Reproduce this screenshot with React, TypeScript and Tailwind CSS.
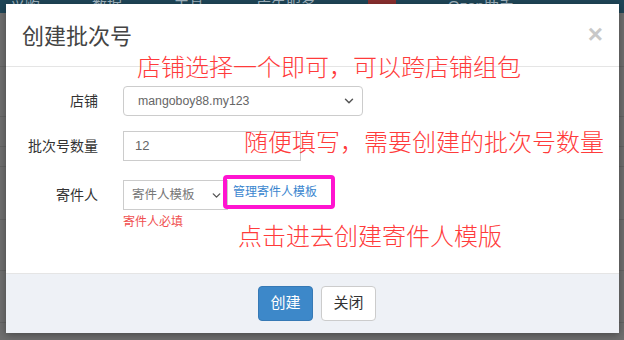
import { ChevronDown } from 'lucide-react';

const cjk = "font-['Liberation_Sans','Noto_Sans_CJK_SC',sans-serif]";

const bgRows = [40, 50, 30, 20, 53, 51, 52];

export default function App() {
  return (
    <div className={`relative w-[624px] h-[340px] overflow-hidden bg-[#6f6f6f] ${cjk}`}>
      {/* page behind the overlay */}
      <div className="h-[27px] bg-[#1f4658] flex items-end gap-[52px] pl-[10px] text-[15px] leading-none text-[#9fb3bf] translate-y-[-14px]">
        <span>采购</span>
        <span>数据</span>
        <span>工具</span>
        <span>广告服务</span>
        <span className="w-[28px] h-[14px] bg-[#8a2f2f]" />
        <span>Ozon助手</span>
      </div>
      <div className="flex flex-col">
        {bgRows.map((h, i) => (
          <div key={i} className="border-b border-[#646464]" style={{ height: h }} />
        ))}
      </div>

      {/* modal */}
      <div className="absolute left-[6px] top-[4px] w-[613px] h-[329px] bg-white flex flex-col shadow-[0_2px_8px_rgba(0,0,0,0.35)]">
        <div className="h-[63px] shrink-0 border-b border-[#e5e5e5] flex items-center justify-between pl-[16px] pr-[16px]">
          <h4 className="text-[22px] leading-none text-[#444] translate-y-[2px]">创建批次号</h4>
          <span className="text-[26px] leading-none font-bold text-[#c8c8c8] translate-y-[-1px]">×</span>
        </div>

        <div className="relative flex-1 pt-[19px]">
          <div className="flex items-center h-[30px]">
            <label className="w-[92px] text-right text-[14px] text-[#333]">店铺</label>
            <div className="ml-[25px] w-[240px] h-[30px] border border-[#ccc] rounded-[4px] flex items-center justify-between pl-[14px] pr-[6px]">
              <span className="text-[12.3px] text-[#666]">mangoboy88.my123</span>
              <ChevronDown className="w-[14px] h-[14px] text-[#555]" strokeWidth={2.5} />
            </div>
          </div>

          <div className="flex items-center h-[30px] mt-[15px]">
            <label className="w-[92px] text-right text-[14px] text-[#333]">批次号数量</label>
            <div className="ml-[25px] w-[178px] h-[30px] border border-[#ccc] flex items-center pl-[11px]">
              <span className="text-[13px] text-[#666]">12</span>
            </div>
          </div>

          <div className="flex items-start mt-[19px]">
            <label className="w-[92px] h-[30px] flex items-center justify-end text-[14px] text-[#333]">寄件人</label>
            <div className="ml-[25px] flex flex-col">
              <div className="flex items-start">
                <div className="w-[105px] h-[30px] border border-[#ccc] flex items-center justify-between pl-[8px] pr-[4px]">
                  <span className="text-[12.5px] text-[#777]">寄件人模板</span>
                  <ChevronDown className="w-[13px] h-[13px] text-[#555]" strokeWidth={2.5} />
                </div>
                <a className="ml-[5px] mt-[6px] text-[12px] leading-none text-[#3a86cf]">管理寄件人模板</a>
              </div>
              <span className="mt-[6px] text-[12px] leading-none text-[#f05050]">寄件人必填</span>
            </div>
          </div>

          {/* annotations drawn over the screenshot */}
          <div className="absolute left-[217px] top-[108px] w-[112px] h-[34px] border-[4px] border-[#ff14d0] rounded-[4px]" />
          <p className="absolute left-[131px] top-[-11px] text-[24px] leading-none font-light text-[#ff3b3b] whitespace-nowrap">店铺选择一个即可，可以跨店铺组包</p>
          <p className="absolute left-[238px] top-[64px] text-[24px] leading-none font-light text-[#ff3b3b] whitespace-nowrap">随便填写，需要创建的批次号数量</p>
          <p className="absolute left-[232px] top-[158px] text-[24px] leading-none font-light text-[#ff3b3b] whitespace-nowrap">点击进去创建寄件人模版</p>
        </div>

        <div className="h-[60px] shrink-0 border-t border-[#e5e5e5] bg-[#eef1f6] flex items-center pl-[252px] gap-[8px]">
          <button className="w-[55px] h-[35px] rounded-[4px] bg-[#3d88c9] border border-[#3679b5] text-white text-[15px]">创建</button>
          <button className="w-[55px] h-[35px] rounded-[4px] bg-white border border-[#ccc] text-[#333] text-[15px]">关闭</button>
        </div>
      </div>
    </div>
  );
}
